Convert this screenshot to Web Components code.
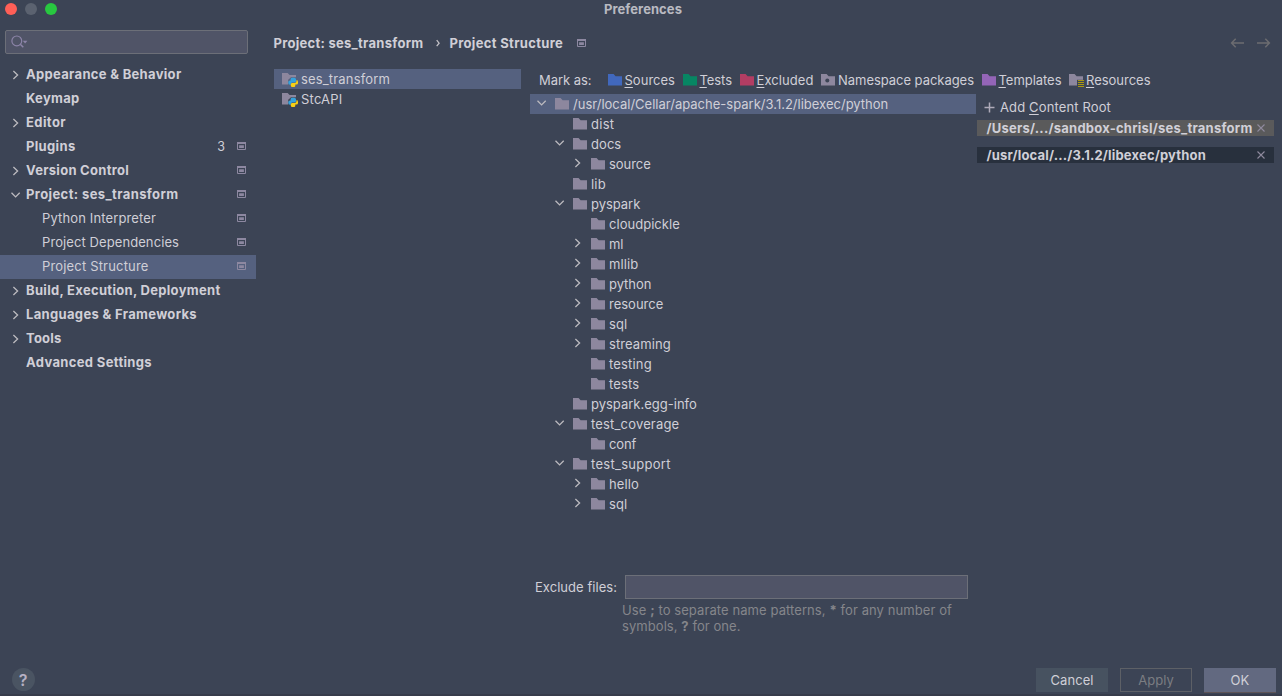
<!DOCTYPE html>
<html lang="en">
<head>
<meta charset="utf-8">
<title>Preferences</title>
<style>
html,body{margin:0;height:100%;background:#3c4455;overflow:hidden}
body{font:13px/20px Inter,"Liberation Sans",sans-serif;color:#d0cfd7}
</style>
</head>
<body>
<pref-window></pref-window>
<script>
const make = (el, html) => { el.attachShadow({mode:'open'}).innerHTML = html; };

/* Single line of text, tracked to a given advance width */
customElements.define('ui-label', class extends HTMLElement {
  connectedCallback() {
    if (this.shadowRoot) return;
    make(this, `<style>:host{display:block;white-space:pre;flex:none;width:max-content}</style><slot></slot>`);
    const w = +this.getAttribute('w');
    if (w) {
      const n = this.textContent.length, natural = this.getBoundingClientRect().width;
      this.style.letterSpacing = ((w - natural) / n).toFixed(4) + 'px';
      this.style.width = w + 'px';
    }
  }
});

const FOLDER = 'M0 0H5.6L7.6 2.2H14V11.6H0Z';
const folder = (c, extra='') => `<svg width="16" height="14" viewBox="0 0 16 14"><path d="${FOLDER}" fill="${c}"/>${extra}</svg>`;
const ICONS = {
  right:`<svg width="8" height="10" viewBox="0 0 8 10"><path d="M1.4 1L5.6 5L1.4 9" fill="none" stroke="#bcbabf" stroke-width="1.3"/></svg>`,
  down:`<svg width="10" height="8" viewBox="0 0 10 8"><path d="M.5 1.8L4.6 5.9L8.7 1.8" fill="none" stroke="#bcbabf" stroke-width="1.3"/></svg>`,
  project:`<svg width="9" height="9" viewBox="0 0 9 9"><path d="M.5.5H8.5V7.5H.5Z" fill="none" stroke="#8d88a1"/><path d="M0 0H9V2H0ZM2.1 3.2H6.9V5.9H2.1Z" fill="#8d88a1"/></svg>`,
  search:`<svg width="19" height="14" viewBox="0 0 19 14"><circle cx="5.8" cy="5.9" r="4.9" fill="none" stroke="#8c84a8" stroke-width="1.2"/><path d="M9.3 9.2L12.3 12.3" stroke="#8c84a8" stroke-width="1.5"/><path d="M11.8 5.8H16.4L14.1 8.6Z" fill="#8c84a8"/></svg>`,
  folder:folder('#8d879e'), blue:folder('#4168bd'), green:folder('#078663'), red:folder('#b33d63'), purple:folder('#9465b7'),
  package:folder('#8d879e','<circle cx="6.3" cy="6.6" r="2" fill="#3c4455"/>'),
  resources:folder('#8d879e','<path d="M8 5.8H16V14H8Z" fill="#3c4455"/><path d="M9 6.5H15M9 8.5H15M9 10.5H15M9 12.5H15" stroke="#a89710" stroke-width="1.2"/>'),
  python:`<svg width="16" height="15" viewBox="0 0 16 15"><path d="M0 0H5.6L7.6 2H14V4.2H9L6.2 6.8V11.4H0Z" fill="#8d879e"/><path d="M10.4 4.7H12.2Q14 4.7 14 6.3V8.1Q14 9.6 12.4 9.6H10.2Q8.8 9.6 8.8 11.1V11.8H8Q6.3 11.8 6.3 10V9.1Q6.3 7.5 8 7.5H8.6V6Q8.8 4.7 10.4 4.7Z" fill="#35a2dc"/><path d="M14.5 7H14.6Q16 7.2 16 9V10Q16 11.5 14.4 11.5H13.3V12.7Q13.3 14 12 14H10.3Q8.8 14 8.8 12.4V11.3Q8.8 9.9 10.4 9.9H12.5Q14.5 9.9 14.5 8Z" fill="#f7cf16"/></svg>`,
  plus:`<svg width="11" height="11" viewBox="0 0 11 11"><path d="M5.5.5V10.5M.5 5.5H10.5" stroke="#aeaab9" stroke-width="1.5"/></svg>`,
  close:`<svg width="8" height="8" viewBox="0 0 8 8"><path d="M.5.5L7.5 7.5M7.5.5L.5 7.5" stroke="#8f8a9e" stroke-width="1.1"/></svg>`,
  back:`<svg width="14" height="10" viewBox="0 0 14 10"><path d="M5.7.7L1.6 5L5.7 9.3M1.6 5H14" fill="none" stroke="#6c6c70" stroke-width="1.5"/></svg>`,
  forward:`<svg width="14" height="10" viewBox="0 0 14 10"><path d="M8.3.7L12.4 5L8.3 9.3M12.4 5H0" fill="none" stroke="#6c6c70" stroke-width="1.5"/></svg>`,
  crumb:`<svg width="5" height="8" viewBox="0 0 5 8"><path d="M.7 1.2L3.1 4.2L.7 7.2" fill="none" stroke="#c2c0c6" stroke-width="1.3"/></svg>`
};
customElements.define('ui-icon', class extends HTMLElement {
  connectedCallback() {
    if (this.shadowRoot) return;
    make(this, `<style>:host{display:block;flex:none}svg{display:block}</style>${ICONS[this.getAttribute('name')]}`);
  }
});

/* Settings category row in the sidebar */
customElements.define('nav-item', class extends HTMLElement {
  connectedCallback() {
    const a = k => this.getAttribute(k), child = this.hasAttribute('child');
    make(this, `<style>
      :host{display:grid;grid-template-columns:${child?42:26}px 1fr auto 9px;box-sizing:border-box;height:24px;align-items:center;padding:0 10px 1px 0;font-weight:${child?400:700}}
      :host([selected]){background:#55617f}
      ui-label{margin-top:-1px}
      .arrow{display:flex;justify-content:center;width:10px;padding-left:11px}
      .count{font-weight:400;font-size:12.5px;margin-right:12px;padding-top:1px}
      </style><span class="arrow">${a('arrow')?`<ui-icon name="${a('arrow')}"></ui-icon>`:''}</span>
      <ui-label w="${a('w')}">${this.innerHTML}</ui-label>
      <span class="count">${a('count')||''}</span>
      ${this.hasAttribute('scoped')?'<ui-icon name="project"></ui-icon>':''}`);
  }
});

/* Folder row of the content tree */
customElements.define('tree-row', class extends HTMLElement {
  connectedCallback() {
    const d = +this.getAttribute('depth'), arrow = this.getAttribute('arrow');
    make(this, `<style>
      :host{display:flex;height:20px;align-items:center;padding-left:${7 + 18*d}px}
      :host([selected]){background:#55617f}
      .arrow{width:10px;display:flex;justify-content:center;margin-right:8px}
      .arrow ui-icon{margin-top:-2px}.f{margin-right:2px;margin-top:1px}
      </style><span class="arrow">${arrow?`<ui-icon name="${arrow}"></ui-icon>`:''}</span>
      <ui-icon class="f" name="folder"></ui-icon><ui-label w="${this.getAttribute('w') - .7}">${this.textContent}</ui-label>`);
  }
});

customElements.define('module-row', class extends HTMLElement {
  connectedCallback() {
    make(this, `<style>:host{display:flex;height:20px;align-items:center;padding-left:8px;gap:3px}
      :host([selected]){background:#55617f}ui-icon{margin-top:2px}</style>
      <ui-icon name="python"></ui-icon><ui-label w="${this.getAttribute('w')}">${this.textContent}</ui-label>`);
  }
});

customElements.define('mark-button', class extends HTMLElement {
  connectedCallback() {
    make(this, `<style>:host{display:flex;align-items:center;flex:none}ui-icon{width:17px;margin-top:2px}
      u{text-underline-offset:2px;text-decoration-thickness:1px;text-decoration-skip-ink:none}</style>
      <ui-icon name="${this.getAttribute('icon')}"></ui-icon><ui-label w="${this.getAttribute('w')}">${this.innerHTML}</ui-label>`);
  }
});

customElements.define('content-root', class extends HTMLElement {
  connectedCallback() {
    make(this, `<style>:host{display:flex;align-items:center;justify-content:space-between;height:16px;padding:0 9px 0 9.5px;background:#5a5a5b;font-weight:700}
      :host([active]){background:#28303d}</style>
      <ui-label w="${this.getAttribute('w')}">${this.textContent}</ui-label><ui-icon name="close"></ui-icon>`);
  }
});

customElements.define('push-button', class extends HTMLElement {
  connectedCallback() {
    make(this, `<style>:host{display:flex;box-sizing:border-box;width:72px;height:24px;align-items:center;justify-content:center;background:#475260}
      :host([disabled]){background:none;border:1px solid #5d6066;color:#7b7d82}
      :host([primary]){background:#626980;box-shadow:0 1px #5c5356}</style>
      <ui-label w="${this.getAttribute('w')}">${this.textContent}</ui-label>`);
  }
});

customElements.define('title-bar', class extends HTMLElement {
  connectedCallback() {
    make(this, `<style>:host{display:grid;grid-template-columns:1fr auto 1fr;height:18px;align-items:center;font-weight:700;color:#b9bac1}
      .lights{display:flex;gap:8px;padding-left:5px}i{width:12px;height:12px;border-radius:50%;background:#ff5f57}
      i:nth-child(2){background:#5b6270}i:nth-child(3){background:#28c840}ui-label{margin:-1px 0 0 4px;line-height:18px}</style>
      <div class="lights"><i></i><i></i><i></i></div><ui-label w="78">Preferences</ui-label>`);
  }
});

customElements.define('settings-nav', class extends HTMLElement {
  connectedCallback() {
    make(this, `<style>:host{display:block;width:256px}
      .search{display:flex;align-items:center;box-sizing:border-box;height:24px;margin:12px 8px 9px 5px;padding-left:5px;border:1px solid #6c6f78;border-radius:2px;background:#505467}</style>
      <div class="search"><ui-icon name="search"></ui-icon></div>
      <nav-item arrow="right" w="155.5">Appearance &amp; Behavior</nav-item>
      <nav-item w="53.5">Keymap</nav-item>
      <nav-item arrow="right" w="40">Editor</nav-item>
      <nav-item w="49.5" count="3" scoped>Plugins</nav-item>
      <nav-item arrow="right" w="103" scoped>Version Control</nav-item>
      <nav-item arrow="down" w="152.5" scoped>Project: ses_transform</nav-item>
      <nav-item child w="114" scoped>Python Interpreter</nav-item>
      <nav-item child w="137" scoped>Project Dependencies</nav-item>
      <nav-item child w="106.5" scoped selected>Project Structure</nav-item>
      <nav-item arrow="right" w="194.5">Build, Execution, Deployment</nav-item>
      <nav-item arrow="right" w="171">Languages &amp; Frameworks</nav-item>
      <nav-item arrow="right" w="35.5">Tools</nav-item>
      <nav-item w="126">Advanced Settings</nav-item>`);
  }
});

const TREE = [
  [0,'down','/usr/local/Cellar/apache-spark/3.1.2/libexec/python',316],[1,'','dist',24],[1,'down','docs',31],
  [2,'right','source',42.5],[1,'','lib',15.5],[1,'down','pyspark',50],[2,'','cloudpickle',71.5],[2,'right','ml',15],
  [2,'right','mllib',30],[2,'right','python',43],[2,'right','resource',55],[2,'right','sql',19],
  [2,'right','streaming',62.5],[2,'','testing',43.5],[2,'','tests',31],[1,'','pyspark.egg-info',106.5],
  [1,'down','test_coverage',89],[2,'','conf',28],[1,'down','test_support',80.5],[2,'right','hello',30.5],[2,'right','sql',19]];

customElements.define('structure-page', class extends HTMLElement {
  connectedCallback() {
    make(this, `<style>
      :host{display:grid;grid-template-rows:51px 1fr;padding-left:18px}
      header{display:flex;align-items:center;padding:0 11px 2px 0;margin-left:-.5px;font-weight:700}
      .c{margin:0 9px 0 12px}.p{margin:2px 0 0 14px}
      .nav{display:flex;gap:13px;margin-left:auto}
      .main{display:grid;grid-template-columns:247px 1fr;gap:9px}
      .marks{display:flex;align-items:center;height:25px;box-sizing:border-box;padding:0 0 4px 9px;gap:7.5px}
      .marks>ui-label{margin-right:8.5px}
      .cols{display:grid;grid-template-columns:445.5px 297px;gap:1.5px}
      .tree{height:481px}
      .add{display:flex;align-items:center;gap:5px;height:26px;padding-left:7px}
      .roots{display:grid;gap:11px}
      u{text-underline-offset:2px;text-decoration-thickness:1px;text-decoration-skip-ink:none}
      .ex{display:flex;align-items:center;padding-left:5px;gap:8px}
      .field{box-sizing:border-box;width:343px;height:24px;border:1px solid #6c6f78;background:#505467}
      .hint{display:grid;padding:3px 0 0 92px;line-height:16px;color:#85868b}
      </style>
      <header><ui-label w="150">Project: ses_transform</ui-label><ui-icon class="c" name="crumb"></ui-icon>
        <ui-label w="113.5">Project Structure</ui-label><ui-icon class="p" name="project"></ui-icon>
        <div class="nav"><ui-icon name="back"></ui-icon><ui-icon name="forward"></ui-icon></div></header>
      <div class="main">
        <div><module-row w="89" selected>ses_transform</module-row><module-row w="41.5">StcAPI</module-row></div>
        <div>
          <div class="marks"><ui-label w="52.5">Mark as:</ui-label>
            <mark-button icon="blue" w="50.5"><u>S</u>ources</mark-button>
            <mark-button icon="green" w="32.5"><u>T</u>ests</mark-button>
            <mark-button icon="red" w="57"><u>E</u>xcluded</mark-button>
            <mark-button icon="package" w="136">Namespace packages</mark-button>
            <mark-button icon="purple" w="63"><u>T</u>emplates</mark-button>
            <mark-button icon="resources" w="64.5"><u>R</u>esources</mark-button></div>
          <div class="cols">
            <div class="tree">${TREE.map((r,i)=>`<tree-row depth="${r[0]}" arrow="${r[1]}" w="${r[3]}"${i?'':' selected'}>${r[2]}</tree-row>`).join('')}</div>
            <div><div class="add"><ui-icon name="plus"></ui-icon><ui-label w="111">Add <u>C</u>ontent Root</ui-label></div>
              <div class="roots"><content-root w="266">/Users/.../sandbox-chrisl/ses_transform</content-root>
              <content-root w="219.5" active>/usr/local/.../3.1.2/libexec/python</content-root></div></div>
          </div>
          <div class="ex"><ui-label w="82">Exclude files:</ui-label><div class="field"></div></div>
          <div class="hint"><ui-label w="330">Use <b>;</b> to separate name patterns, <b>*</b> for any number of</ui-label>
            <ui-label w="118.5">symbols, <b>?</b> for one.</ui-label></div>
        </div>
      </div>`);
  }
});

customElements.define('dialog-footer', class extends HTMLElement {
  connectedCallback() {
    make(this, `<style>:host{display:flex;align-items:center;gap:12px;padding:0 6px 4px 11.5px;box-sizing:border-box;height:28px}
      .help{display:grid;place-items:center;width:23px;height:23px;border-radius:50%;background:#4a5462;margin:-1px auto 0 0;font-size:16px;font-weight:600;color:#b5b0c3}</style>
      <span class="help">?</span><push-button w="43">Cancel</push-button><push-button w="35.5" disabled>Apply</push-button><push-button w="19" primary>OK</push-button>`);
  }
});

customElements.define('pref-window', class extends HTMLElement {
  connectedCallback() {
    make(this, `<style>:host{display:grid;grid-template-rows:18px 650px 28px;width:1282px;height:696px;box-shadow:inset 0 -2px #373c4b}
      .body{display:grid;grid-template-columns:256px 1fr}</style>
      <title-bar></title-bar><div class="body"><settings-nav></settings-nav><structure-page></structure-page></div><dialog-footer></dialog-footer>`);
  }
});
</script>
</body>
</html>
